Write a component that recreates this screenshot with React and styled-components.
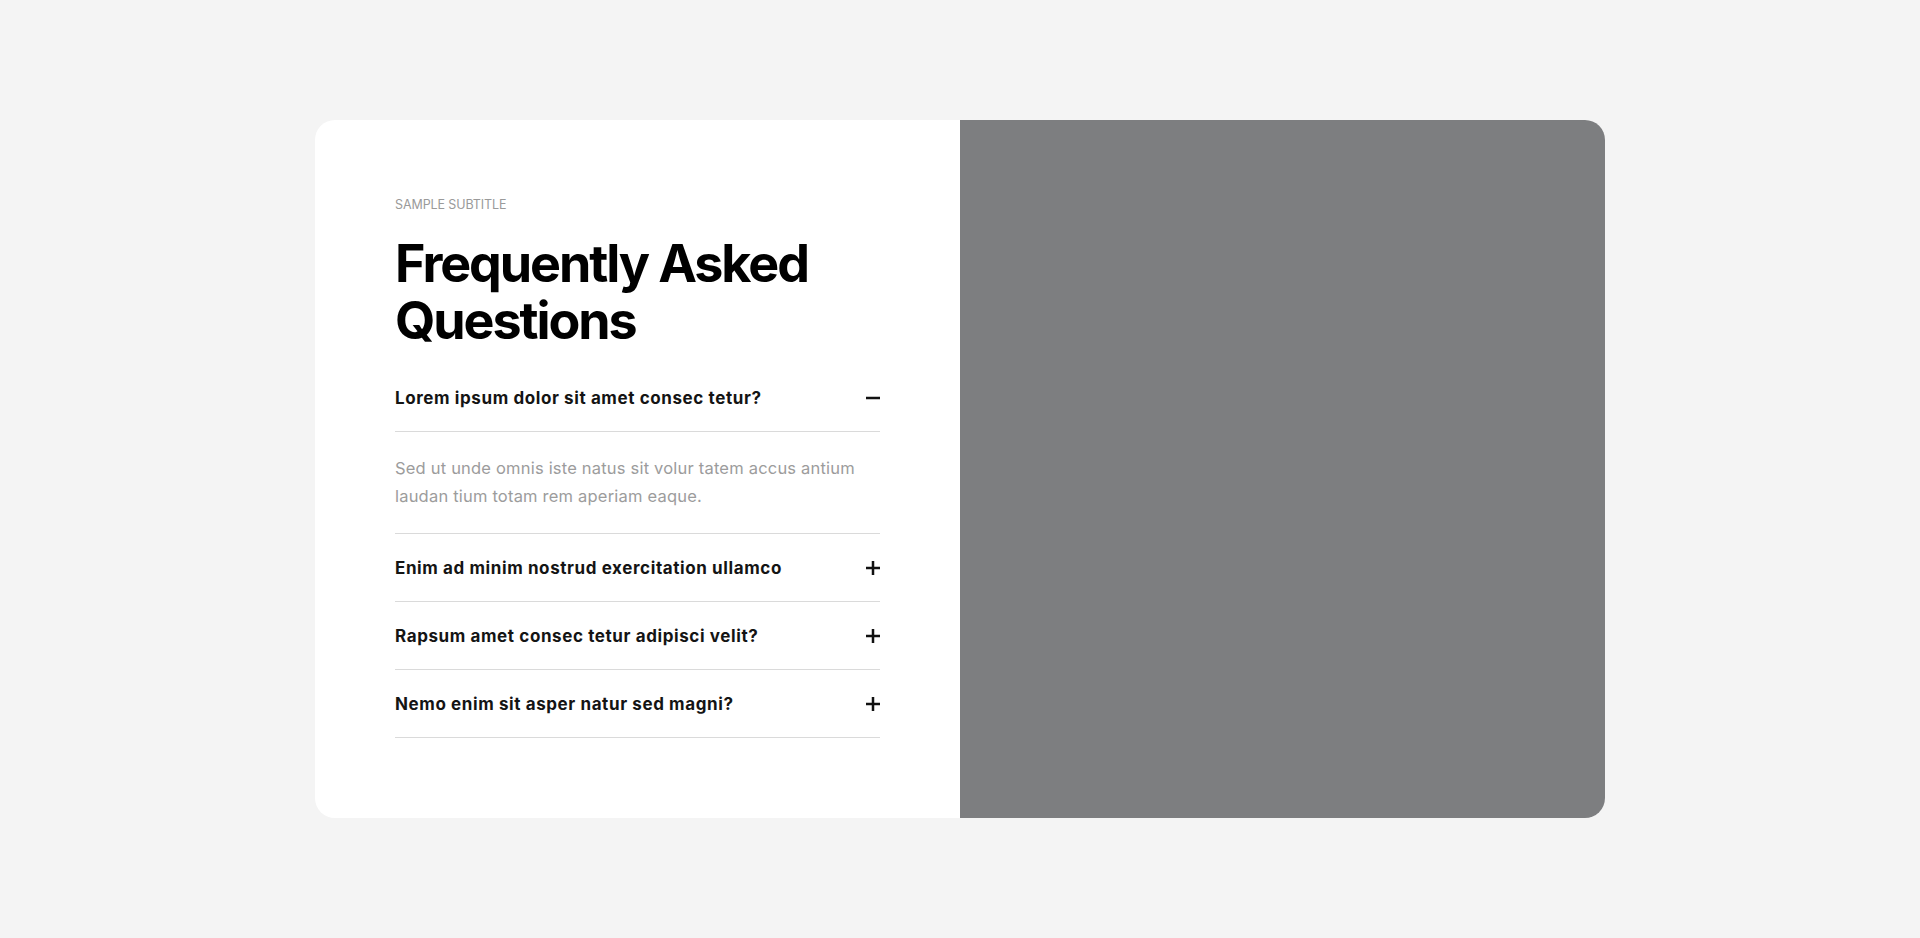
import React, { useState } from "react";
import styled, { createGlobalStyle } from "styled-components";

const GlobalStyle = createGlobalStyle`
  *, *::before, *::after { box-sizing: border-box; }
  html, body { margin: 0; padding: 0; }
  body {
    background: #f4f4f4;
    font-family: Inter, "Noto Sans", "Liberation Sans", sans-serif;
    -webkit-font-smoothing: antialiased;
  }
`;

const Page = styled.main`
  min-height: 100vh;
  display: flex;
  align-items: center;
  justify-content: center;
`;

const Card = styled.section`
  width: 1290px;
  display: grid;
  grid-template-columns: 645px 645px;
  border-radius: 20px;
  overflow: hidden;
  background: #ffffff;
`;

const Content = styled.div`
  padding: 77px 80px 80px 80px;
  display: flex;
  flex-direction: column;
`;

const Subtitle = styled.span`
  font-size: 12.5px;
  line-height: 16px;
  color: #9a9a9a;
  text-transform: uppercase;
  letter-spacing: -0.1px;
`;

const Heading = styled.h2`
  margin: 22px 0 15px;
  font-size: 52px;
  line-height: 57px;
  font-weight: 700;
  letter-spacing: -2.1px;
  color: #000;
`;

const List = styled.div`
  display: flex;
  flex-direction: column;
`;

const Item = styled.div`
  border-bottom: 1px solid #dadada;
`;

const Question = styled.button`
  all: unset;
  width: 100%;
  display: flex;
  align-items: center;
  justify-content: space-between;
  padding: 22px 0 21px;
  cursor: pointer;
  font-size: 17px;
  line-height: 24px;
  font-weight: 700;
  letter-spacing: 0.6px;
  color: #141414;
`;

const Answer = styled.div`
  border-top: 1px solid #dadada;
  padding: 22px 20px 23px 0;
  font-size: 16.5px;
  line-height: 28px;
  color: #9c9c9c;
  letter-spacing: 0.2px;
`;

const Toggle = styled.svg`
  width: 14px;
  height: 14px;
  flex: none;
`;

const Media = styled.div`
  background: #7d7e80;
`;

const Icon = ({ open }) => (
  <Toggle viewBox="0 0 14 14">
    <rect x="0" y="5.75" width="14" height="2.5" fill="#111" />
    {!open && <rect x="5.75" y="0" width="2.5" height="14" fill="#111" />}
  </Toggle>
);

const faqs = [
  {
    q: "Lorem ipsum dolor sit amet consec tetur?",
    a: "Sed ut unde omnis iste natus sit volur tatem accus antium laudan tium totam rem aperiam eaque.",
  },
  {
    q: "Enim ad minim nostrud exercitation ullamco",
    a: "Sed ut unde omnis iste natus sit volur tatem accus antium laudan tium totam rem aperiam eaque.",
  },
  {
    q: "Rapsum amet consec tetur adipisci velit?",
    a: "Sed ut unde omnis iste natus sit volur tatem accus antium laudan tium totam rem aperiam eaque.",
  },
  {
    q: "Nemo enim sit asper natur sed magni?",
    a: "Sed ut unde omnis iste natus sit volur tatem accus antium laudan tium totam rem aperiam eaque.",
  },
];

export default function App() {
  const [open, setOpen] = useState(0);
  return (
    <>
      <GlobalStyle />
      <Page>
        <Card>
          <Content>
            <Subtitle>Sample subtitle</Subtitle>
            <Heading>
              Frequently Asked
              <br />
              Questions
            </Heading>
            <List>
              {faqs.map((f, i) => (
                <Item key={f.q}>
                  <Question onClick={() => setOpen(open === i ? -1 : i)}>
                    {f.q}
                    <Icon open={open === i} />
                  </Question>
                  {open === i && <Answer>{f.a}</Answer>}
                </Item>
              ))}
            </List>
          </Content>
          <Media />
        </Card>
      </Page>
    </>
  );
}
